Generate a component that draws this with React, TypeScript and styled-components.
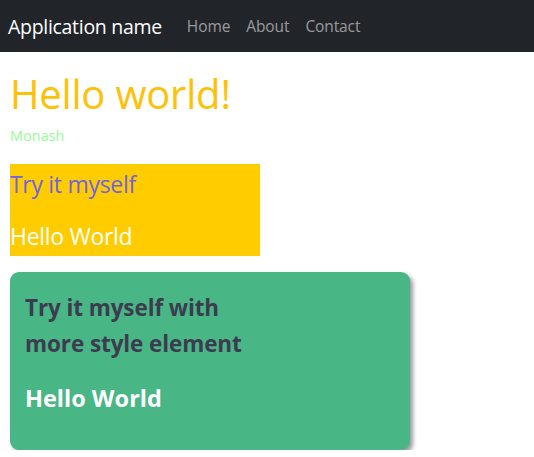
import React from "react";
import styled, { createGlobalStyle } from "styled-components";

const GlobalStyle = createGlobalStyle`
  * { box-sizing: border-box; }
  body {
    margin: 0;
    background: #fff;
    font-family: "Open Sans", "Noto Sans", sans-serif;
  }
`;

const NavBar = styled.nav`
  display: flex;
  align-items: center;
  height: 52px;
  padding: 0 8px;
  background: #212529;
`;

const Brand = styled.span`
  color: #fff;
  font-size: 19.5px;
  letter-spacing: -0.3px;
  margin-right: 25px;
`;

const NavLinks = styled.ul`
  display: flex;
  gap: 16px;
  list-style: none;
  margin: 0;
  padding: 0;
`;

const NavLink = styled.li`
  color: rgba(255, 255, 255, 0.55);
  font-size: 15.5px;
  letter-spacing: -0.1px;
`;

const Main = styled.main`
  padding: 0 10px;
`;

const Title = styled.h1`
  margin: 18px 0 0;
  color: #ffc107;
  font-size: 40px;
  font-weight: 400;
  line-height: 48px;
  letter-spacing: -0.2px;
`;

const Subtitle = styled.p`
  margin: 8px 0 0;
  color: #98fb98;
  font-size: 14.5px;
  line-height: 20px;
`;

const YellowBox = styled.section`
  width: 250px;
  margin-top: 18px;
  background: #fc0;
`;

const BoxText = styled.p<{ $color: string }>`
  margin: 0;
  color: ${(p) => p.$color};
  font-size: 23px;
  line-height: 40px;
  letter-spacing: -0.3px;
  & + & {
    margin-top: 12px;
  }
`;

const Card = styled.section`
  width: 400px;
  height: 178px;
  margin-top: 16px;
  padding: 18px 15px 14px;
  background: #48b685;
  border-radius: 9px;
  box-shadow: 3px 3px 4px #9a9aa0;
`;

const CardHeading = styled.h2`
  width: 250px;
  margin: 0;
  color: #3c3b4f;
  font-size: 22.5px;
  font-weight: 700;
  line-height: 36px;
  letter-spacing: -0.1px;
`;

const CardText = styled.p`
  margin: 20px 0 0;
  color: #fff;
  font-size: 23.5px;
  font-weight: 700;
  line-height: 32px;
  letter-spacing: 0;
`;

export default function App() {
  return (
    <>
      <GlobalStyle />
      <NavBar>
        <Brand>Application name</Brand>
        <NavLinks>
          <NavLink>Home</NavLink>
          <NavLink>About</NavLink>
          <NavLink>Contact</NavLink>
        </NavLinks>
      </NavBar>
      <Main>
        <Title>Hello world!</Title>
        <Subtitle>Monash</Subtitle>
        <YellowBox>
          <BoxText $color="#6f63e0">Try it myself</BoxText>
          <BoxText $color="#fff">Hello World</BoxText>
        </YellowBox>
        <Card>
          <CardHeading>Try it myself with more style element</CardHeading>
          <CardText>Hello World</CardText>
        </Card>
      </Main>
    </>
  );
}
